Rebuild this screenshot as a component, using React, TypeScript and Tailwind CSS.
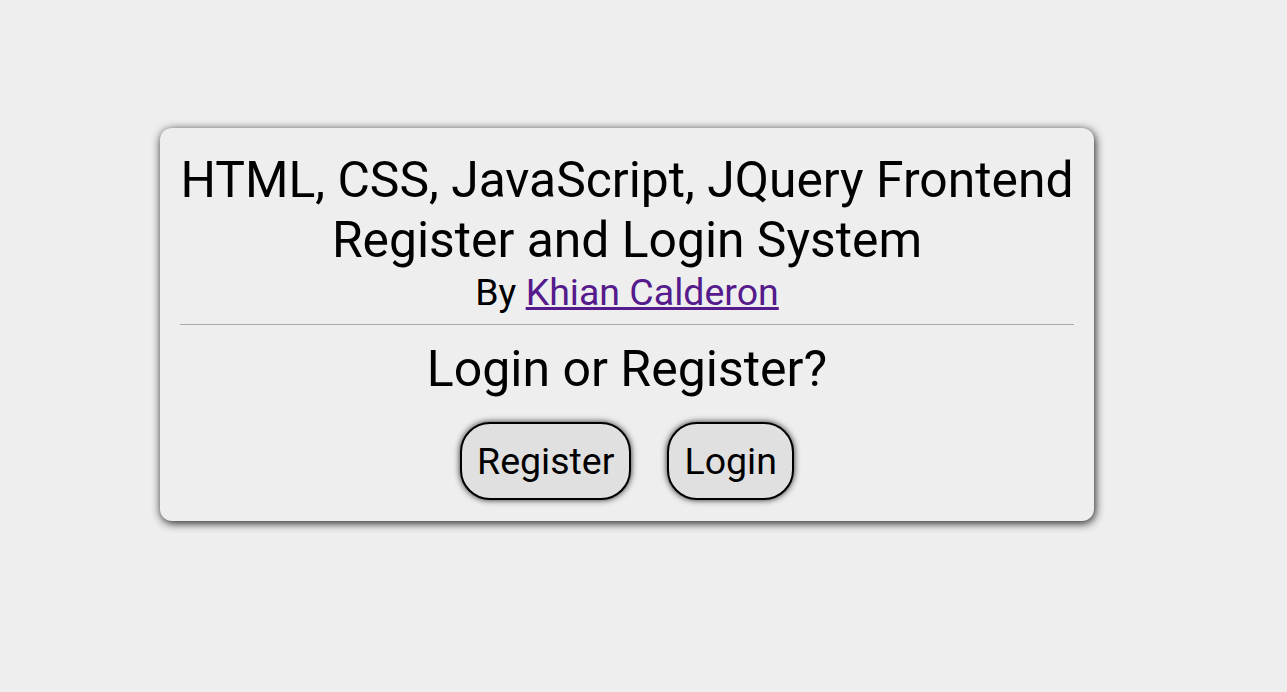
export default function App() {
  return (
    <div className="min-h-[692px] w-full bg-[#eeeeee] pl-[160px] pt-[128px] font-['Roboto',sans-serif] text-black">
      <div className="w-[934px] rounded-[12px] bg-[#eeeeee] px-[20px] pt-[22px] pb-[21px] text-center shadow-[1px_2px_10px_rgba(0,0,0,0.9)]">
        <h1 className="text-[49.8px] leading-[60px] font-normal">
          <span className="block whitespace-nowrap">HTML, CSS, JavaScript, JQuery Frontend</span>
          <span className="block">Register and Login System</span>
        </h1>
        <p className="text-[37.5px] leading-[44px]">
          By{" "}
          <a href="#" className="text-[#551a8b] underline">
            Khian Calderon
          </a>
        </p>
        <hr className="mt-[10px] border-t border-[#aaaaaa]" />
        <h2 className="mt-[14px] text-[50px] leading-[60px]">Login or Register?</h2>
        <div className="mt-[23px] flex justify-center gap-[36px]">
          <button className="h-[78px] rounded-[30px] border-2 border-black bg-[#e0e0e0] px-[15px] text-[37.5px] shadow-[0_0_6px_rgba(0,0,0,0.85)]">
            Register
          </button>
          <button className="h-[78px] rounded-[30px] border-2 border-black bg-[#e0e0e0] px-[15px] text-[37.5px] shadow-[0_0_6px_rgba(0,0,0,0.85)]">
            Login
          </button>
        </div>
      </div>
    </div>
  );
}
